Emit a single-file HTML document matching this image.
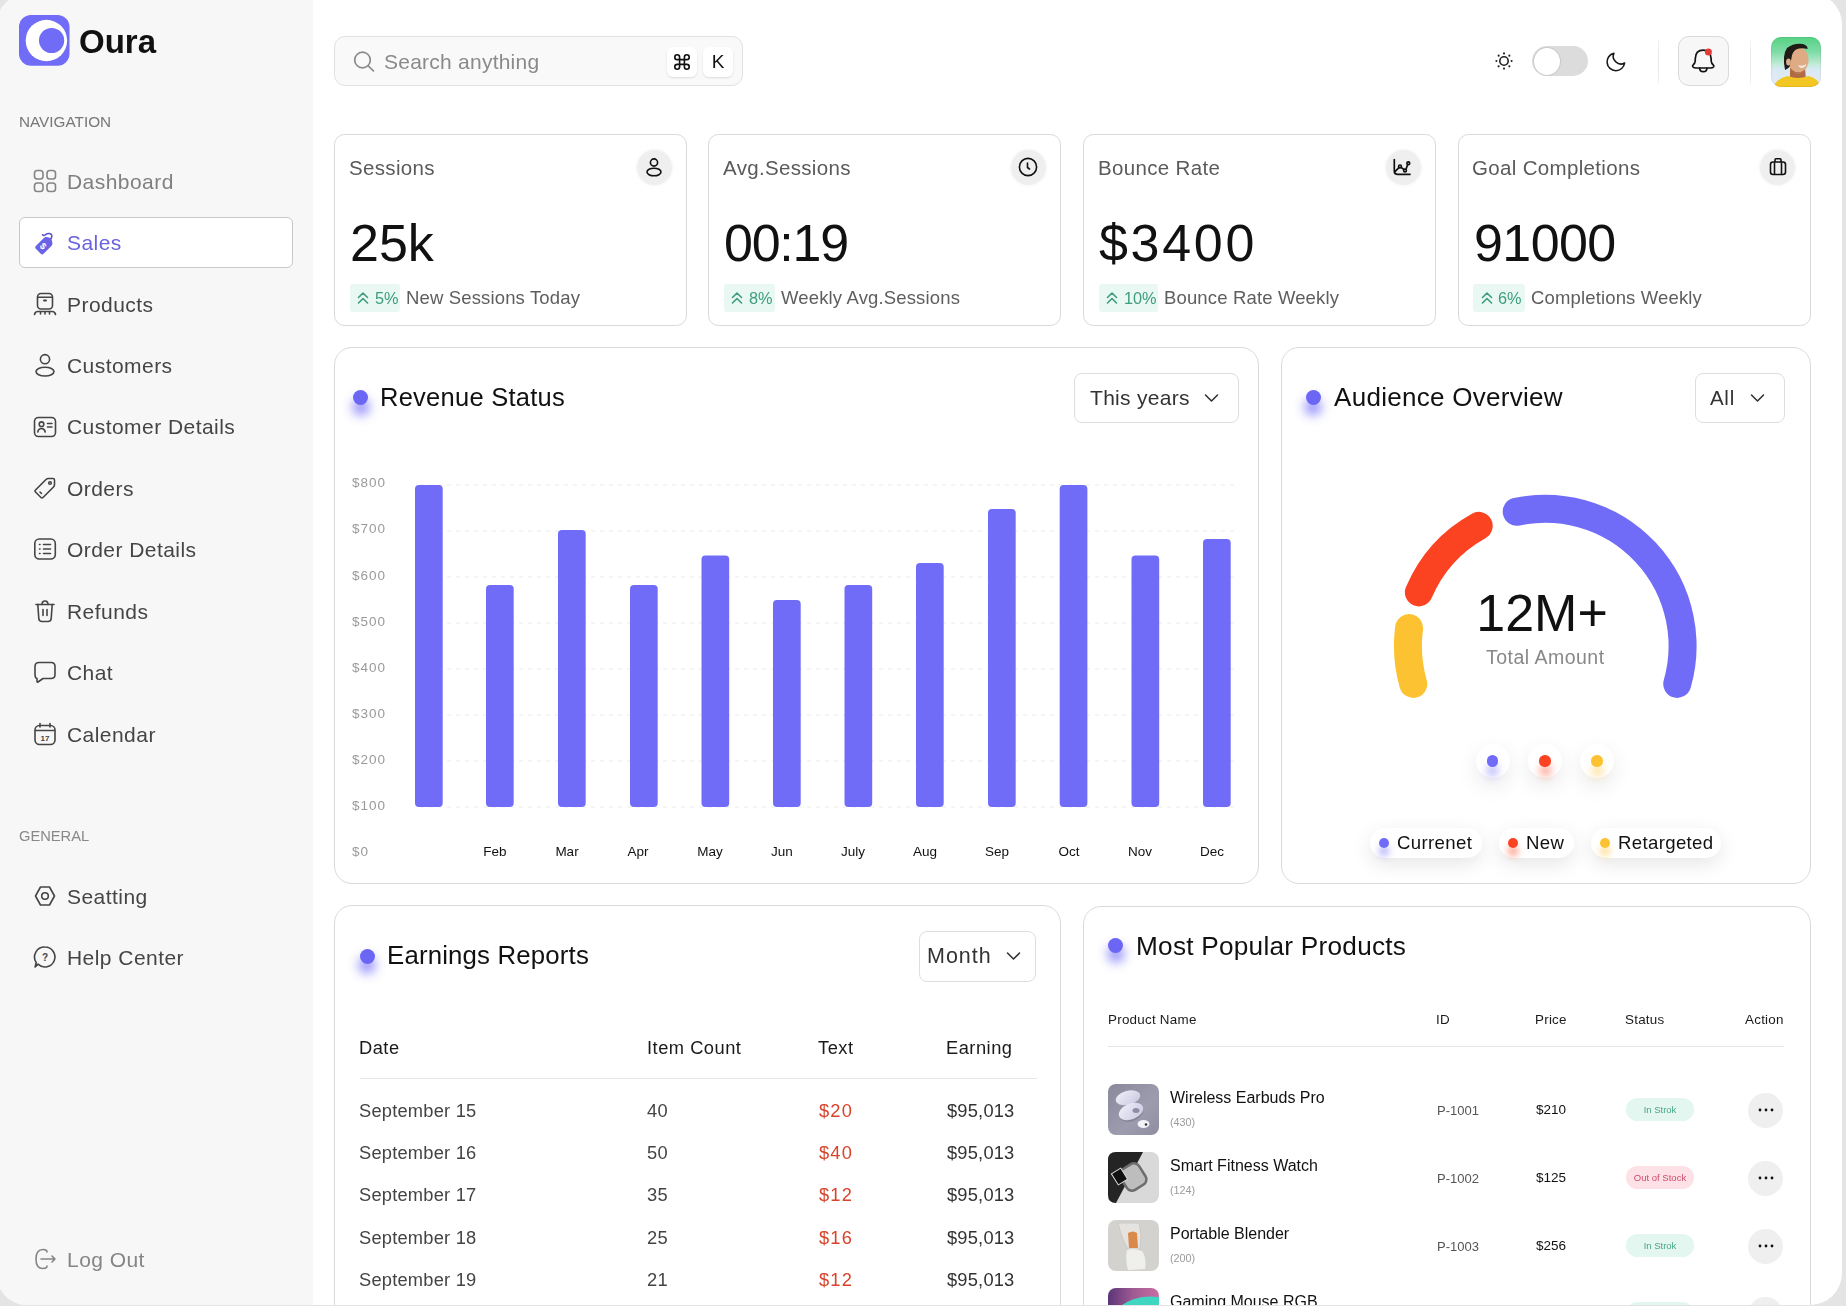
<!DOCTYPE html><html><head><meta charset="utf-8"><style>
*{box-sizing:border-box;margin:0;padding:0}
html,body{width:1846px;height:1306px;overflow:hidden;background:#e4e4e4}
body{font-family:"Liberation Sans",sans-serif;position:relative}
.win{position:absolute;left:-3px;top:-6px;width:1845px;height:1310.7px;border-radius:30px 30px 32px 30px;overflow:hidden;background:#fff}
.t{position:absolute;line-height:1;white-space:nowrap;will-change:transform}
.b{position:absolute}
svg.b{overflow:visible}
</style></head><body><div class="win"><div class="b" style="left:3px;top:6px;width:1842px;height:1306px">
<div class="b" style="left:0px;top:0px;width:313px;height:1305px;background:#f7f7f7"></div>
<svg class="b" style="left:19.4px;top:15px;" width="51" height="51" viewBox="0 0 51 51" fill="none"><rect x="0" y="0" width="50.5" height="50.8" rx="12" fill="#716cf8"/><circle cx="27.4" cy="25.5" r="20.7" fill="#fff"/><circle cx="32.6" cy="25.5" r="12.6" fill="#716cf8"/></svg>
<div class="t" style="left:79.30px;top:24.76px;font-size:33px;color:#111;font-weight:700;">Oura</div>
<div class="t" style="left:19.10px;top:114.05px;font-size:15.3px;color:#777;font-weight:400;">NAVIGATION</div>
<svg class="b" style="left:32.5px;top:168.9px;" width="24" height="24" viewBox="0 0 24 24" fill="none"><g stroke="#858585" stroke-width="1.6" stroke-linecap="round" stroke-linejoin="round"><rect x="1.5" y="1.5" width="8.5" height="8.5" rx="2.8"/><rect x="14" y="1.5" width="8.5" height="8.5" rx="2.8"/><rect x="1.5" y="14" width="8.5" height="8.5" rx="2.8"/><rect x="14" y="14" width="8.5" height="8.5" rx="2.8"/></g></svg>
<div class="t" style="left:67.20px;top:170.72px;font-size:21px;color:#808080;font-weight:400;;letter-spacing:0.45px">Dashboard</div>
<div class="b" style="left:19px;top:217px;width:274px;height:51px;background:#fff;border:1px solid #c9c9c9;border-radius:6px"></div>
<svg class="b" style="left:32.5px;top:230.32000000000002px;" width="24" height="24" viewBox="0 0 24 24" fill="none"><g transform="rotate(45 12 14.5)"><path d="M6.5 11 Q6.5 9 8 8 L12 5.5 L16 8 Q17.5 9 17.5 11 L17.5 22 Q17.5 24 15.5 24 L8.5 24 Q6.5 24 6.5 22 Z" fill="#6a63e6"/><text x="12" y="20" font-size="9" font-weight="700" fill="#fff" text-anchor="middle" font-family="Liberation Sans">$</text></g><path d="M18.3 8.3 Q19.8 4.2 16.8 3.6 Q14.3 3.3 12.3 4.8 Q10.5 6 9.6 4.8" stroke="#5a54d0" stroke-width="1.6" fill="none" stroke-linecap="round"/></svg>
<div class="t" style="left:67.20px;top:232.14px;font-size:21px;color:#6a63e0;font-weight:400;;letter-spacing:0.45px">Sales</div>
<svg class="b" style="left:32.5px;top:291.74px;" width="24" height="24" viewBox="0 0 24 24" fill="none"><g stroke="#454545" stroke-width="1.6" stroke-linecap="round" stroke-linejoin="round"><rect x="4.5" y="1.5" width="15" height="15.5" rx="3.5"/><path d="M4.8 5.2 H19.2"/><path d="M11 8.6 H13" stroke-width="2"/><path d="M1.5 22.5 Q2 19.5 5 19.5 H19 Q22 19.5 22.5 22.5"/><path d="M7.5 20 V22 M12 20 V22 M16.5 20 V22"/></g></svg>
<div class="t" style="left:67.20px;top:293.56px;font-size:21px;color:#454545;font-weight:400;;letter-spacing:0.45px">Products</div>
<svg class="b" style="left:32.5px;top:353.15999999999997px;" width="24" height="24" viewBox="0 0 24 24" fill="none"><g stroke="#454545" stroke-width="1.6" stroke-linecap="round" stroke-linejoin="round"><circle cx="12" cy="6.2" r="4.6"/><ellipse cx="12" cy="18.6" rx="9" ry="4.4"/></g></svg>
<div class="t" style="left:67.20px;top:354.98px;font-size:21px;color:#454545;font-weight:400;;letter-spacing:0.45px">Customers</div>
<svg class="b" style="left:32.5px;top:414.58px;" width="24" height="24" viewBox="0 0 24 24" fill="none"><g stroke="#454545" stroke-width="1.6" stroke-linecap="round" stroke-linejoin="round"><rect x="1.5" y="2.5" width="21" height="19" rx="4"/><circle cx="8.5" cy="9.2" r="2.3"/><path d="M4.8 17 Q5.5 13.5 8.5 13.5 Q11.5 13.5 12.2 17"/><path d="M14.5 8.5 H19 M14.5 12 H19"/></g></svg>
<div class="t" style="left:67.20px;top:416.40px;font-size:21px;color:#454545;font-weight:400;;letter-spacing:0.45px">Customer Details</div>
<svg class="b" style="left:32.5px;top:476.0px;" width="24" height="24" viewBox="0 0 24 24" fill="none"><g stroke="#454545" stroke-width="1.6" stroke-linecap="round" stroke-linejoin="round"><path d="M2.5 14 L13 3.5 Q14 2.5 15.5 2.5 L20 2.5 Q21.5 2.5 21.5 4 L21.5 8.5 Q21.5 10 20.5 11 L10 21.5 Q9 22.5 8 21.5 L2.5 16 Q1.5 15 2.5 14 Z"/><circle cx="17" cy="7" r="1.3"/><path d="M7 16 L8.5 17.5"/></g></svg>
<div class="t" style="left:67.20px;top:477.82px;font-size:21px;color:#454545;font-weight:400;;letter-spacing:0.45px">Orders</div>
<svg class="b" style="left:32.5px;top:537.42px;" width="24" height="24" viewBox="0 0 24 24" fill="none"><g stroke="#454545" stroke-width="1.6" stroke-linecap="round" stroke-linejoin="round"><rect x="1.8" y="2" width="20.5" height="20" rx="4.5"/><path d="M6.5 7.5 H7 M6.5 12 H7 M6.5 16.5 H7 M10.5 7.5 H17.5 M10.5 12 H17.5 M10.5 16.5 H17.5"/></g></svg>
<div class="t" style="left:67.20px;top:539.24px;font-size:21px;color:#454545;font-weight:400;;letter-spacing:0.45px">Order Details</div>
<svg class="b" style="left:32.5px;top:598.84px;" width="24" height="24" viewBox="0 0 24 24" fill="none"><g stroke="#454545" stroke-width="1.6" stroke-linecap="round" stroke-linejoin="round"><path d="M3 5.5 H21"/><path d="M9 5.5 Q9 2 12 2 Q15 2 15 5.5"/><path d="M4.8 5.5 L5.8 19.5 Q6 22.5 9 22.5 H15 Q18 22.5 18.2 19.5 L19.2 5.5"/><path d="M10 10.5 V16.5 M14 10.5 V16.5"/></g></svg>
<div class="t" style="left:67.20px;top:600.66px;font-size:21px;color:#454545;font-weight:400;;letter-spacing:0.45px">Refunds</div>
<svg class="b" style="left:32.5px;top:660.26px;" width="24" height="24" viewBox="0 0 24 24" fill="none"><g stroke="#454545" stroke-width="1.6" stroke-linecap="round" stroke-linejoin="round"><path d="M6 2.5 H18 Q22 2.5 22 6.5 V14.5 Q22 18.5 18 18.5 H10 L5 22 Q4 22.5 4 21.5 V18.5 Q2 18 2 14.5 V6.5 Q2 2.5 6 2.5 Z"/></g></svg>
<div class="t" style="left:67.20px;top:662.08px;font-size:21px;color:#454545;font-weight:400;;letter-spacing:0.45px">Chat</div>
<svg class="b" style="left:32.5px;top:721.68px;" width="24" height="24" viewBox="0 0 24 24" fill="none"><g stroke="#454545" stroke-width="1.6" stroke-linecap="round" stroke-linejoin="round"><rect x="2" y="3.5" width="20" height="19" rx="4.5"/><path d="M7 1.5 V5 M17 1.5 V5 M2.5 8.5 H21.5"/></g><text x="12" y="19" font-size="8" font-weight="700" fill="#454545" text-anchor="middle" font-family="Liberation Sans">17</text></svg>
<div class="t" style="left:67.20px;top:723.50px;font-size:21px;color:#454545;font-weight:400;;letter-spacing:0.45px">Calendar</div>
<div class="t" style="left:19.10px;top:828.95px;font-size:14.7px;color:#888;font-weight:400;">GENERAL</div>
<svg class="b" style="left:32.5px;top:883.6999999999999px;" width="24" height="24" viewBox="0 0 24 24" fill="none"><g stroke="#454545" stroke-width="1.6" stroke-linecap="round" stroke-linejoin="round"><path d="M7.5 3 H16.5 L21.5 12 L16.5 21 H7.5 L2.5 12 Z" stroke-linejoin="round"/><circle cx="12" cy="12" r="3.3"/></g></svg>
<div class="t" style="left:67.20px;top:885.52px;font-size:21px;color:#454545;font-weight:400;;letter-spacing:0.45px">Seatting</div>
<svg class="b" style="left:32.5px;top:944.9999999999999px;" width="24" height="24" viewBox="0 0 24 24" fill="none"><g stroke="#454545" stroke-width="1.6" stroke-linecap="round" stroke-linejoin="round"><path d="M12 2 A10 10 0 1 1 5 19.2 L2.3 21.8 Q2 22.2 2.2 21.5 L3.2 17.5 A10 10 0 0 1 12 2 Z"/></g><text x="12" y="16" font-size="10" font-weight="700" fill="#454545" text-anchor="middle" font-family="Liberation Sans">?</text></svg>
<div class="t" style="left:67.20px;top:946.82px;font-size:21px;color:#454545;font-weight:400;;letter-spacing:0.45px">Help Center</div>
<svg class="b" style="left:32.5px;top:1247.0px;" width="24" height="24" viewBox="0 0 24 24" fill="none"><g stroke="#858585" stroke-width="1.6" stroke-linecap="round" stroke-linejoin="round"><path d="M14 5 Q14 2.5 10 2.5 Q3 2.5 3 12 Q3 21.5 10 21.5 Q14 21.5 14 19"/><path d="M8 12 H22 M19 9 L22 12 L19 15"/></g></svg>
<div class="t" style="left:67.20px;top:1248.82px;font-size:21px;color:#858585;font-weight:400;;letter-spacing:0.45px">Log Out</div>
<div class="b" style="left:334px;top:36px;width:409px;height:50px;background:#f9f9f9;border:1px solid #e2e2e2;border-radius:11px"></div>
<svg class="b" style="left:352px;top:50px;" width="24" height="24" viewBox="0 0 24 24" fill="none"><g stroke="#8a8a8a" stroke-width="1.7" stroke-linecap="round"><circle cx="10.5" cy="10" r="7.8"/><path d="M16.2 15.8 L21.5 21"/></g></svg>
<div class="t" style="left:384.20px;top:51.22px;font-size:21px;color:#8a8a8a;font-weight:400;;letter-spacing:0.24px">Search anything</div>
<div class="b" style="left:667px;top:47px;width:30px;height:30px;background:#fff;border-radius:6px;box-shadow:0 1px 2px rgba(0,0,0,.12)"></div>
<div class="b" style="left:703px;top:47px;width:30px;height:30px;background:#fff;border-radius:6px;box-shadow:0 1px 2px rgba(0,0,0,.12)"></div>
<svg class="b" style="left:673.5px;top:53.5px;" width="16" height="16" viewBox="0 0 16 16" fill="none"><path d="M6 6 V4 A2 2 0 1 0 4 6 H12 A2 2 0 1 0 10 4 V12 A2 2 0 1 0 12 10 H4 A2 2 0 1 0 6 12 Z" stroke="#111" stroke-width="1.35" stroke-linejoin="round" transform="translate(-1.6 -1.6) scale(1.2)"/></svg>
<div class="t" style="left:518.00px;width:400px;text-align:center;top:52.41px;font-size:19px;color:#111;font-weight:400;">K</div>
<svg class="b" style="left:1494.5px;top:52px;" width="18" height="18" viewBox="0 0 18 18" fill="none"><circle cx="9" cy="9" r="4.2" stroke="#222" stroke-width="1.6"/><circle cx="16.60" cy="9.00" r="1.05" fill="#222"/><circle cx="14.37" cy="14.37" r="1.05" fill="#222"/><circle cx="9.00" cy="16.60" r="1.05" fill="#222"/><circle cx="3.63" cy="14.37" r="1.05" fill="#222"/><circle cx="1.40" cy="9.00" r="1.05" fill="#222"/><circle cx="3.63" cy="3.63" r="1.05" fill="#222"/><circle cx="9.00" cy="1.40" r="1.05" fill="#222"/><circle cx="14.37" cy="3.63" r="1.05" fill="#222"/></svg>
<div class="b" style="left:1532px;top:46px;width:56px;height:30px;background:#dcdcdc;border-radius:15px"></div>
<div class="b" style="left:1533px;top:46.5px;width:28px;height:29.0px;background:#fff;border-radius:50%;border:1.5px solid #c9c9c9"></div>
<svg class="b" style="left:1606px;top:51px;" width="20" height="20" viewBox="0 0 20 20" fill="none"><path d="M7.9 2.3 A8.8 8.8 0 1 0 18.6 12 A7.66 7.66 0 0 1 7.9 2.3 Z" stroke="#1a1a1a" stroke-width="1.6" stroke-linejoin="round"/></svg>
<div class="b" style="left:1657.8px;top:40px;width:1.2000000000000455px;height:44px;background:linear-gradient(#f4f4f4,#e8e8e8 30%,#e8e8e8 70%,#f4f4f4)"></div>
<div class="b" style="left:1678px;top:36px;width:50.5px;height:50px;background:#f7f7f7;border:1px solid #dadada;border-radius:11px"></div>
<svg class="b" style="left:1691px;top:48px;" width="26" height="26" viewBox="0 0 26 26" fill="none"><g stroke="#111" stroke-width="1.7" stroke-linejoin="round" stroke-linecap="round"><path d="M12.2 2.2 C7 2.2 4.5 5.5 4.3 10.5 L4.2 13 Q4 15.5 2.2 16.8 Q1 18 2 19 Q3 20 5 20 H19.5 Q21.5 20 22.5 19 Q23.4 18 22.2 16.8 Q20.4 15.5 20.2 13 L20.1 10.5 C19.9 5.5 17.4 2.2 12.2 2.2 Z"/><path d="M8.7 20.2 Q8.7 23.6 12.3 23.6 Q15.9 23.6 15.9 20.2"/></g><circle cx="17.4" cy="4" r="3.5" fill="#e43a35"/></svg>
<div class="b" style="left:1749.8px;top:40px;width:1.2000000000000455px;height:44px;background:linear-gradient(#f4f4f4,#e8e8e8 30%,#e8e8e8 70%,#f4f4f4)"></div>
<svg class="b" style="left:1770.5px;top:36.5px;" width="50" height="50" viewBox="0 0 50 50" fill="none"><defs><linearGradient id="ag" x1="0" y1="0" x2="0" y2="1"><stop offset="0" stop-color="#55d283"/><stop offset=".3" stop-color="#7fdca6"/><stop offset=".55" stop-color="#c2ebd9"/><stop offset=".65" stop-color="#d9e9f4"/><stop offset="1" stop-color="#e4ecf7"/></linearGradient><clipPath id="ac"><rect width="50" height="50" rx="10"/></clipPath></defs>
<g clip-path="url(#ac)"><rect width="50" height="50" fill="url(#ag)"/>
<path d="M19 31 L34 31 L35 43 L19 43 Z" fill="#b06a44"/>
<path d="M2 52 Q4 42 17 39 Q27 43 37 39 Q48 41 50 52 Z" fill="#f2c623"/>
<ellipse cx="27" cy="22.5" rx="10.5" ry="13" fill="#dfab85" transform="rotate(-8 27 22.5)"/>
<path d="M19.5 32 Q27 38.5 34 32.5 Q31 37.5 26 37.5 Z" fill="#b97852"/>
<path d="M14 33 Q11 18 16 11 Q23 5.5 32 7 Q37 8.5 36.5 12 Q30 10.5 25 12.5 Q21 15 20.5 21 Q19.5 27 18.5 30 Q16.5 32 14 33 Z" fill="#1f1c18"/>
<ellipse cx="17.5" cy="25" rx="2.4" ry="3.6" fill="#e0ab88"/>
<path d="M27 28 Q31.5 30 35.5 27 Q34 31 30 31 Q28 30.5 27 28 Z" fill="#f4ece6"/>
</g><rect x=".5" y=".5" width="49" height="49" rx="10" stroke="rgba(0,0,0,.06)"/></svg>
<div class="b" style="left:334px;top:134px;width:353px;height:191.5px;background:#fff;border:1.2px solid #d9d9d9;border-radius:10.5px"></div>
<div class="t" style="left:348.50px;top:157.84px;font-size:20.5px;color:#5a5a5a;font-weight:400;;letter-spacing:0.33px">Sessions</div>
<div class="b" style="left:636.5px;top:150px;width:35.0px;height:35px;background:#efefef;border-radius:50%;box-shadow:0 0 3px 1px rgba(0,0,0,.04)"></div>
<svg class="b" style="left:644px;top:157px;" width="20" height="20" viewBox="0 0 20 20" fill="none"><g stroke="#111" stroke-width="1.6"><circle cx="10" cy="5.5" r="3.6"/><ellipse cx="10" cy="15" rx="7" ry="3.8"/></g></svg>
<div class="t" style="left:350.00px;top:216.97px;font-size:52px;color:#111;font-weight:400;letter-spacing:0px">25k</div>
<div class="b" style="left:349.7px;top:284.4px;width:50.5px;height:27.30000000000001px;background:#e9f8f3;border-radius:3px"></div>
<svg class="b" style="left:356px;top:290px;" width="14" height="16" viewBox="0 0 14 16" fill="none"><path d="M2.5 7.5 L7 3 L11.5 7.5 M2.5 13 L7 8.5 L11.5 13" stroke="#3d9d7c" stroke-width="1.6" stroke-linecap="round" stroke-linejoin="round"/></svg>
<div class="t" style="left:374.50px;top:290.40px;font-size:16.3px;color:#3d9d7c;font-weight:400;">5%</div>
<div class="t" style="left:406.00px;top:289.34px;font-size:18.5px;color:#5e5e5e;font-weight:400;;letter-spacing:0.15px">New Sessions Today</div>
<div class="b" style="left:708.3px;top:134px;width:353.0px;height:191.5px;background:#fff;border:1.2px solid #d9d9d9;border-radius:10.5px"></div>
<div class="t" style="left:722.80px;top:157.84px;font-size:20.5px;color:#5a5a5a;font-weight:400;;letter-spacing:0.33px">Avg.Sessions</div>
<div class="b" style="left:1010.8px;top:150px;width:35.0px;height:35px;background:#efefef;border-radius:50%;box-shadow:0 0 3px 1px rgba(0,0,0,.04)"></div>
<svg class="b" style="left:1018.3px;top:157px;" width="20" height="20" viewBox="0 0 20 20" fill="none"><g stroke="#111" stroke-width="1.6" stroke-linecap="round"><circle cx="10" cy="10" r="8.6"/><path d="M9.5 6 V10.5 L11.5 12"/></g></svg>
<div class="t" style="left:724.30px;top:216.97px;font-size:52px;color:#111;font-weight:400;letter-spacing:-1.25px">00:19</div>
<div class="b" style="left:724.0px;top:284.4px;width:51.0px;height:27.30000000000001px;background:#e9f8f3;border-radius:3px"></div>
<svg class="b" style="left:730.3px;top:290px;" width="14" height="16" viewBox="0 0 14 16" fill="none"><path d="M2.5 7.5 L7 3 L11.5 7.5 M2.5 13 L7 8.5 L11.5 13" stroke="#3d9d7c" stroke-width="1.6" stroke-linecap="round" stroke-linejoin="round"/></svg>
<div class="t" style="left:748.80px;top:290.40px;font-size:16.3px;color:#3d9d7c;font-weight:400;">8%</div>
<div class="t" style="left:780.80px;top:289.34px;font-size:18.5px;color:#5e5e5e;font-weight:400;;letter-spacing:0.15px">Weekly Avg.Sessions</div>
<div class="b" style="left:1083.3px;top:134px;width:353.0px;height:191.5px;background:#fff;border:1.2px solid #d9d9d9;border-radius:10.5px"></div>
<div class="t" style="left:1097.80px;top:157.84px;font-size:20.5px;color:#5a5a5a;font-weight:400;;letter-spacing:0.33px">Bounce Rate</div>
<div class="b" style="left:1385.8px;top:150px;width:35.0px;height:35px;background:#efefef;border-radius:50%;box-shadow:0 0 3px 1px rgba(0,0,0,.04)"></div>
<svg class="b" style="left:1393.3px;top:157px;" width="20" height="20" viewBox="0 0 20 20" fill="none"><g stroke="#111" stroke-width="1.7" stroke-linecap="round" stroke-linejoin="round"><path d="M1.3 2.5 V14.3 Q1.3 17.3 4.3 17.3 H17"/><path d="M2 14.6 L5.9 10.6 M8.1 10.4 L10.9 12.5 M13 12.3 L14.6 7.7"/><circle cx="7" cy="9.4" r="1.4"/><circle cx="12" cy="13.4" r="1.4"/><circle cx="15.3" cy="6.2" r="1.4"/></g></svg>
<div class="t" style="left:1099.30px;top:216.97px;font-size:52px;color:#111;font-weight:400;letter-spacing:2.7px">$3400</div>
<div class="b" style="left:1099.0px;top:284.4px;width:59.0px;height:27.30000000000001px;background:#e9f8f3;border-radius:3px"></div>
<svg class="b" style="left:1105.3px;top:290px;" width="14" height="16" viewBox="0 0 14 16" fill="none"><path d="M2.5 7.5 L7 3 L11.5 7.5 M2.5 13 L7 8.5 L11.5 13" stroke="#3d9d7c" stroke-width="1.6" stroke-linecap="round" stroke-linejoin="round"/></svg>
<div class="t" style="left:1123.80px;top:290.40px;font-size:16.3px;color:#3d9d7c;font-weight:400;">10%</div>
<div class="t" style="left:1163.80px;top:289.34px;font-size:18.5px;color:#5e5e5e;font-weight:400;;letter-spacing:0.15px">Bounce Rate Weekly</div>
<div class="b" style="left:1457.5px;top:134px;width:353.0px;height:191.5px;background:#fff;border:1.2px solid #d9d9d9;border-radius:10.5px"></div>
<div class="t" style="left:1472.00px;top:157.84px;font-size:20.5px;color:#5a5a5a;font-weight:400;;letter-spacing:0.33px">Goal Completions</div>
<div class="b" style="left:1760.0px;top:150px;width:35.0px;height:35px;background:#efefef;border-radius:50%;box-shadow:0 0 3px 1px rgba(0,0,0,.04)"></div>
<svg class="b" style="left:1767.5px;top:157px;" width="20" height="20" viewBox="0 0 20 20" fill="none"><g stroke="#111" stroke-width="1.6" stroke-linejoin="round"><rect x="2.5" y="5" width="15" height="12.5" rx="2.5"/><path d="M7 5 V2.8 Q7 1.8 8 1.8 H12 Q13 1.8 13 2.8 V5"/><path d="M6.5 5.3 V17.3 M13.5 5.3 V17.3"/></g></svg>
<div class="t" style="left:1473.50px;top:216.97px;font-size:52px;color:#111;font-weight:400;letter-spacing:-0.6px">91000</div>
<div class="b" style="left:1473.2px;top:284.4px;width:52.0px;height:27.30000000000001px;background:#e9f8f3;border-radius:3px"></div>
<svg class="b" style="left:1479.5px;top:290px;" width="14" height="16" viewBox="0 0 14 16" fill="none"><path d="M2.5 7.5 L7 3 L11.5 7.5 M2.5 13 L7 8.5 L11.5 13" stroke="#3d9d7c" stroke-width="1.6" stroke-linecap="round" stroke-linejoin="round"/></svg>
<div class="t" style="left:1498.00px;top:290.40px;font-size:16.3px;color:#3d9d7c;font-weight:400;">6%</div>
<div class="t" style="left:1531.00px;top:289.34px;font-size:18.5px;color:#5e5e5e;font-weight:400;;letter-spacing:0.15px">Completions Weekly</div>
<div class="b" style="left:334px;top:347px;width:924.5px;height:536.5px;background:#fff;border:1.2px solid #d9d9d9;border-radius:18px"></div>
<div class="b" style="left:352.7px;top:398.5px;width:16.0px;height:16.0px;background:#716cf8;border-radius:50%;filter:blur(6px);opacity:.85"></div>
<div class="b" style="left:353.2px;top:390.0px;width:15.0px;height:15.0px;background:#6c66f5;border-radius:50%"></div>
<div class="t" style="left:380.20px;top:385.01px;font-size:25.5px;color:#111;font-weight:400;;letter-spacing:0.25px">Revenue Status</div>
<div class="b" style="left:1074px;top:372.6px;width:165.4000000000001px;height:50.099999999999966px;background:#fff;border:1.2px solid #dedede;border-radius:8px"></div>
<div class="t" style="left:1089.70px;top:387.12px;font-size:21px;color:#333;font-weight:400;;letter-spacing:0.3px">This years</div>
<svg class="b" style="left:1204px;top:393px;" width="15" height="10" viewBox="0 0 15 10" fill="none"><path d="M1.5 2 L7.5 8 L13.5 2" stroke="#333" stroke-width="1.6" stroke-linecap="round" stroke-linejoin="round"/></svg>
<svg class="b" style="left:0px;top:0px;" width="1846" height="1306" viewBox="0 0 1846 1306" fill="none"><line x1="420" y1="485" x2="1236" y2="485" stroke="#ececec" stroke-width="1.2" stroke-dasharray="4 5"/><line x1="420" y1="531" x2="1236" y2="531" stroke="#ececec" stroke-width="1.2" stroke-dasharray="4 5"/><line x1="420" y1="577" x2="1236" y2="577" stroke="#ececec" stroke-width="1.2" stroke-dasharray="4 5"/><line x1="420" y1="623" x2="1236" y2="623" stroke="#ececec" stroke-width="1.2" stroke-dasharray="4 5"/><line x1="420" y1="669" x2="1236" y2="669" stroke="#ececec" stroke-width="1.2" stroke-dasharray="4 5"/><line x1="420" y1="715" x2="1236" y2="715" stroke="#ececec" stroke-width="1.2" stroke-dasharray="4 5"/><line x1="420" y1="761" x2="1236" y2="761" stroke="#ececec" stroke-width="1.2" stroke-dasharray="4 5"/><line x1="420" y1="807" x2="1236" y2="807" stroke="#ececec" stroke-width="1.2" stroke-dasharray="4 5"/></svg>
<div class="t" style="left:352.20px;top:476.37px;font-size:13.5px;color:#9a9a9a;font-weight:400;;letter-spacing:1.0px">$800</div>
<div class="t" style="left:352.20px;top:522.44px;font-size:13.5px;color:#9a9a9a;font-weight:400;;letter-spacing:1.0px">$700</div>
<div class="t" style="left:352.20px;top:568.51px;font-size:13.5px;color:#9a9a9a;font-weight:400;;letter-spacing:1.0px">$600</div>
<div class="t" style="left:352.20px;top:614.58px;font-size:13.5px;color:#9a9a9a;font-weight:400;;letter-spacing:1.0px">$500</div>
<div class="t" style="left:352.20px;top:660.65px;font-size:13.5px;color:#9a9a9a;font-weight:400;;letter-spacing:1.0px">$400</div>
<div class="t" style="left:352.20px;top:706.72px;font-size:13.5px;color:#9a9a9a;font-weight:400;;letter-spacing:1.0px">$300</div>
<div class="t" style="left:352.20px;top:752.79px;font-size:13.5px;color:#9a9a9a;font-weight:400;;letter-spacing:1.0px">$200</div>
<div class="t" style="left:352.20px;top:798.86px;font-size:13.5px;color:#9a9a9a;font-weight:400;;letter-spacing:1.0px">$100</div>
<div class="t" style="left:352.20px;top:844.93px;font-size:13.5px;color:#9a9a9a;font-weight:400;;letter-spacing:1.0px">$0</div>
<svg class="b" style="left:0px;top:0px;" width="1846" height="1306" viewBox="0 0 1846 1306" fill="none"><rect x="415" y="485" width="27.7" height="322" rx="4" fill="#716cf8"/><rect x="486" y="585" width="27.7" height="222" rx="4" fill="#716cf8"/><rect x="558" y="530" width="27.7" height="277" rx="4" fill="#716cf8"/><rect x="630" y="585" width="27.7" height="222" rx="4" fill="#716cf8"/><rect x="701.5" y="555.5" width="27.7" height="251.5" rx="4" fill="#716cf8"/><rect x="773" y="600" width="27.7" height="207" rx="4" fill="#716cf8"/><rect x="844.5" y="585" width="27.7" height="222" rx="4" fill="#716cf8"/><rect x="916" y="563" width="27.7" height="244" rx="4" fill="#716cf8"/><rect x="988" y="509" width="27.7" height="298" rx="4" fill="#716cf8"/><rect x="1059.7" y="485" width="27.7" height="322" rx="4" fill="#716cf8"/><rect x="1131.5" y="555.5" width="27.7" height="251.5" rx="4" fill="#716cf8"/><rect x="1203" y="539" width="27.7" height="268" rx="4" fill="#716cf8"/></svg>
<div class="t" style="left:295.00px;width:400px;text-align:center;top:844.77px;font-size:13.5px;color:#111;font-weight:400;">Feb</div>
<div class="t" style="left:366.50px;width:400px;text-align:center;top:844.77px;font-size:13.5px;color:#111;font-weight:400;">Mar</div>
<div class="t" style="left:438.40px;width:400px;text-align:center;top:844.77px;font-size:13.5px;color:#111;font-weight:400;">Apr</div>
<div class="t" style="left:509.80px;width:400px;text-align:center;top:844.77px;font-size:13.5px;color:#111;font-weight:400;">May</div>
<div class="t" style="left:581.60px;width:400px;text-align:center;top:844.77px;font-size:13.5px;color:#111;font-weight:400;">Jun</div>
<div class="t" style="left:653.20px;width:400px;text-align:center;top:844.77px;font-size:13.5px;color:#111;font-weight:400;">July</div>
<div class="t" style="left:725.00px;width:400px;text-align:center;top:844.77px;font-size:13.5px;color:#111;font-weight:400;">Aug</div>
<div class="t" style="left:796.70px;width:400px;text-align:center;top:844.77px;font-size:13.5px;color:#111;font-weight:400;">Sep</div>
<div class="t" style="left:868.50px;width:400px;text-align:center;top:844.77px;font-size:13.5px;color:#111;font-weight:400;">Oct</div>
<div class="t" style="left:940.00px;width:400px;text-align:center;top:844.77px;font-size:13.5px;color:#111;font-weight:400;">Nov</div>
<div class="t" style="left:1011.60px;width:400px;text-align:center;top:844.77px;font-size:13.5px;color:#111;font-weight:400;">Dec</div>
<div class="b" style="left:1280.5px;top:347px;width:530.0px;height:536.5px;background:#fff;border:1.2px solid #d9d9d9;border-radius:18px"></div>
<div class="b" style="left:1305px;top:398.7px;width:16px;height:16.0px;background:#716cf8;border-radius:50%;filter:blur(6px);opacity:.85"></div>
<div class="b" style="left:1305.5px;top:390.2px;width:15.0px;height:15.0px;background:#6c66f5;border-radius:50%"></div>
<div class="t" style="left:1334.00px;top:384.49px;font-size:26px;color:#111;font-weight:400;;letter-spacing:0.29px">Audience Overview</div>
<div class="b" style="left:1695px;top:372.8px;width:89.79999999999995px;height:49.89999999999998px;background:#fff;border:1.2px solid #dedede;border-radius:8px"></div>
<div class="t" style="left:1710.00px;top:387.64px;font-size:20.5px;color:#333;font-weight:400;;letter-spacing:0.7px">All</div>
<svg class="b" style="left:1749.5px;top:393px;" width="15" height="10" viewBox="0 0 15 10" fill="none"><path d="M1.5 2 L7.5 8 L13.5 2" stroke="#333" stroke-width="1.6" stroke-linecap="round" stroke-linejoin="round"/></svg>
<svg class="b" style="left:0px;top:0px;" width="1846" height="1306" viewBox="0 0 1846 1306" fill="none"><path d="M1516.70 511.70 A137.3 137.3 0 0 1 1677.23 683.85" stroke="#716cf8" stroke-width="28" stroke-linecap="round" fill="none"/><path d="M1418.86 592.35 A137.3 137.3 0 0 1 1478.69 525.91" stroke="#fb4322" stroke-width="28" stroke-linecap="round" fill="none"/><path d="M1413.27 683.85 A137.3 137.3 0 0 1 1409.12 628.08" stroke="#fcc232" stroke-width="28" stroke-linecap="round" fill="none"/></svg>
<div class="t" style="left:1341.50px;width:400px;text-align:center;top:586.97px;font-size:52px;color:#111;font-weight:400;">12M+</div>
<div class="t" style="left:1345.30px;width:400px;text-align:center;top:647.99px;font-size:19.5px;color:#888;font-weight:400;;letter-spacing:0.5px;text-indent:0.5px">Total Amount</div>
<div class="b" style="left:1475.5px;top:744px;width:34.0px;height:34px;background:#fff;border-radius:50%;box-shadow:0 8px 22px rgba(0,0,0,.09)"></div>
<div class="b" style="left:1487.0px;top:764.5px;width:11.0px;height:11.0px;background:#716cf8;border-radius:50%;filter:blur(4px);opacity:.55"></div>
<div class="b" style="left:1486.9px;top:755.4px;width:11.199999999999818px;height:11.200000000000045px;background:#716cf8;border-radius:50%"></div>
<div class="b" style="left:1528px;top:744px;width:34px;height:34px;background:#fff;border-radius:50%;box-shadow:0 8px 22px rgba(0,0,0,.09)"></div>
<div class="b" style="left:1539.5px;top:764.5px;width:11.0px;height:11.0px;background:#fb4322;border-radius:50%;filter:blur(4px);opacity:.55"></div>
<div class="b" style="left:1539.4px;top:755.4px;width:11.199999999999818px;height:11.200000000000045px;background:#fb4322;border-radius:50%"></div>
<div class="b" style="left:1580px;top:744px;width:34px;height:34px;background:#fff;border-radius:50%;box-shadow:0 8px 22px rgba(0,0,0,.09)"></div>
<div class="b" style="left:1591.5px;top:764.5px;width:11.0px;height:11.0px;background:#fcc232;border-radius:50%;filter:blur(4px);opacity:.55"></div>
<div class="b" style="left:1591.4px;top:755.4px;width:11.199999999999818px;height:11.200000000000045px;background:#fcc232;border-radius:50%"></div>
<div class="b" style="left:1370px;top:828px;width:111.5px;height:30.299999999999955px;background:#fff;border-radius:16px;box-shadow:0 6px 20px rgba(0,0,0,.1)"></div>
<div class="b" style="left:1379px;top:846px;width:10px;height:10px;background:#716cf8;border-radius:50%;filter:blur(3.5px);opacity:.55"></div>
<div class="b" style="left:1379px;top:838px;width:10px;height:10px;background:#716cf8;border-radius:50%"></div>
<div class="t" style="left:1396.50px;top:833.95px;font-size:18.6px;color:#111;font-weight:400;;letter-spacing:0.35px">Currenet</div>
<div class="b" style="left:1499px;top:828px;width:75px;height:30.299999999999955px;background:#fff;border-radius:16px;box-shadow:0 6px 20px rgba(0,0,0,.1)"></div>
<div class="b" style="left:1508.4px;top:846px;width:10.0px;height:10px;background:#fb4322;border-radius:50%;filter:blur(3.5px);opacity:.55"></div>
<div class="b" style="left:1508.4px;top:838px;width:10.0px;height:10px;background:#fb4322;border-radius:50%"></div>
<div class="t" style="left:1525.70px;top:833.95px;font-size:18.6px;color:#111;font-weight:400;;letter-spacing:0.35px">New</div>
<div class="b" style="left:1590.7px;top:828px;width:130.29999999999995px;height:30.299999999999955px;background:#fff;border-radius:16px;box-shadow:0 6px 20px rgba(0,0,0,.1)"></div>
<div class="b" style="left:1600.4px;top:846px;width:10.0px;height:10px;background:#fcc232;border-radius:50%;filter:blur(3.5px);opacity:.55"></div>
<div class="b" style="left:1600.4px;top:838px;width:10.0px;height:10px;background:#fcc232;border-radius:50%"></div>
<div class="t" style="left:1618.20px;top:833.95px;font-size:18.6px;color:#111;font-weight:400;;letter-spacing:0.35px">Retargeted</div>
<div class="b" style="left:334.3px;top:905px;width:727.2px;height:435px;background:#fff;border:1.2px solid #d9d9d9;border-radius:18px"></div>
<div class="b" style="left:359px;top:957px;width:16px;height:16px;background:#716cf8;border-radius:50%;filter:blur(6px);opacity:.85"></div>
<div class="b" style="left:359.5px;top:948.5px;width:15.0px;height:15.0px;background:#6c66f5;border-radius:50%"></div>
<div class="t" style="left:386.90px;top:943.36px;font-size:25.8px;color:#111;font-weight:400;;letter-spacing:0.17px">Earnings Reports</div>
<div class="b" style="left:919px;top:930.5px;width:116.5px;height:51.0px;background:#fff;border:1.2px solid #dedede;border-radius:8px"></div>
<div class="t" style="left:927.30px;top:946.10px;font-size:21.5px;color:#333;font-weight:400;;letter-spacing:1.0px">Month</div>
<svg class="b" style="left:1005.8px;top:951px;" width="15" height="10" viewBox="0 0 15 10" fill="none"><path d="M1.5 2 L7.5 8 L13.5 2" stroke="#333" stroke-width="1.6" stroke-linecap="round" stroke-linejoin="round"/></svg>
<div class="t" style="left:359.20px;top:1039.11px;font-size:18.3px;color:#1a1a1a;font-weight:400;;letter-spacing:0.5px">Date</div>
<div class="t" style="left:646.60px;top:1039.11px;font-size:18.3px;color:#1a1a1a;font-weight:400;;letter-spacing:0.5px">Item Count</div>
<div class="t" style="left:818.00px;top:1039.11px;font-size:18.3px;color:#1a1a1a;font-weight:400;;letter-spacing:0.5px">Text</div>
<div class="t" style="left:946.20px;top:1039.11px;font-size:18.3px;color:#1a1a1a;font-weight:400;;letter-spacing:0.5px">Earning</div>
<div class="b" style="left:359.5px;top:1077.8px;width:677.5px;height:1.2000000000000455px;background:#e6e6e6"></div>
<div class="t" style="left:359.40px;top:1101.81px;font-size:18.3px;color:#444;font-weight:400;;letter-spacing:0.22px">September 15</div>
<div class="t" style="left:646.80px;top:1101.81px;font-size:18.3px;color:#444;font-weight:400;;letter-spacing:0.3px">40</div>
<div class="t" style="left:819.00px;top:1101.81px;font-size:18.3px;color:#d8432b;font-weight:400;;letter-spacing:1.2px">$20</div>
<div class="t" style="left:947.20px;top:1101.81px;font-size:18.3px;color:#333;font-weight:400;;letter-spacing:0.2px">$95,013</div>
<div class="t" style="left:359.40px;top:1144.11px;font-size:18.3px;color:#444;font-weight:400;;letter-spacing:0.22px">September 16</div>
<div class="t" style="left:646.80px;top:1144.11px;font-size:18.3px;color:#444;font-weight:400;;letter-spacing:0.3px">50</div>
<div class="t" style="left:819.00px;top:1144.11px;font-size:18.3px;color:#d8432b;font-weight:400;;letter-spacing:1.2px">$40</div>
<div class="t" style="left:947.20px;top:1144.11px;font-size:18.3px;color:#333;font-weight:400;;letter-spacing:0.2px">$95,013</div>
<div class="t" style="left:359.40px;top:1186.41px;font-size:18.3px;color:#444;font-weight:400;;letter-spacing:0.22px">September 17</div>
<div class="t" style="left:646.80px;top:1186.41px;font-size:18.3px;color:#444;font-weight:400;;letter-spacing:0.3px">35</div>
<div class="t" style="left:819.00px;top:1186.41px;font-size:18.3px;color:#d8432b;font-weight:400;;letter-spacing:1.2px">$12</div>
<div class="t" style="left:947.20px;top:1186.41px;font-size:18.3px;color:#333;font-weight:400;;letter-spacing:0.2px">$95,013</div>
<div class="t" style="left:359.40px;top:1228.71px;font-size:18.3px;color:#444;font-weight:400;;letter-spacing:0.22px">September 18</div>
<div class="t" style="left:646.80px;top:1228.71px;font-size:18.3px;color:#444;font-weight:400;;letter-spacing:0.3px">25</div>
<div class="t" style="left:819.00px;top:1228.71px;font-size:18.3px;color:#d8432b;font-weight:400;;letter-spacing:1.2px">$16</div>
<div class="t" style="left:947.20px;top:1228.71px;font-size:18.3px;color:#333;font-weight:400;;letter-spacing:0.2px">$95,013</div>
<div class="t" style="left:359.40px;top:1271.01px;font-size:18.3px;color:#444;font-weight:400;;letter-spacing:0.22px">September 19</div>
<div class="t" style="left:646.80px;top:1271.01px;font-size:18.3px;color:#444;font-weight:400;;letter-spacing:0.3px">21</div>
<div class="t" style="left:819.00px;top:1271.01px;font-size:18.3px;color:#d8432b;font-weight:400;;letter-spacing:1.2px">$12</div>
<div class="t" style="left:947.20px;top:1271.01px;font-size:18.3px;color:#333;font-weight:400;;letter-spacing:0.2px">$95,013</div>
<div class="b" style="left:1083px;top:905.5px;width:727.8px;height:434.5px;background:#fff;border:1.2px solid #d9d9d9;border-radius:18px"></div>
<div class="b" style="left:1107.8px;top:946.3px;width:16.0px;height:16.0px;background:#716cf8;border-radius:50%;filter:blur(6px);opacity:.85"></div>
<div class="b" style="left:1108.3px;top:937.8px;width:15.0px;height:15.0px;background:#6c66f5;border-radius:50%"></div>
<div class="t" style="left:1135.60px;top:933.02px;font-size:26.2px;color:#111;font-weight:400;;letter-spacing:0.25px">Most Popular Products</div>
<div class="t" style="left:1107.50px;top:1013.05px;font-size:13.4px;color:#1a1a1a;font-weight:400;;letter-spacing:0.25px">Product Name</div>
<div class="t" style="left:1435.50px;top:1013.05px;font-size:13.4px;color:#1a1a1a;font-weight:400;;letter-spacing:0.25px">ID</div>
<div class="t" style="left:1535.30px;top:1013.05px;font-size:13.4px;color:#1a1a1a;font-weight:400;;letter-spacing:0.25px">Price</div>
<div class="t" style="left:1624.80px;top:1013.05px;font-size:13.4px;color:#1a1a1a;font-weight:400;;letter-spacing:0.25px">Status</div>
<div class="t" style="left:1745.00px;top:1013.05px;font-size:13.4px;color:#1a1a1a;font-weight:400;;letter-spacing:0.25px">Action</div>
<div class="b" style="left:1108px;top:1046px;width:676px;height:1.2000000000000455px;background:#e6e6e6"></div>
<svg class="b" style="left:1108px;top:1084.2px;" width="51" height="51" viewBox="0 0 51 51" fill="none"><defs><linearGradient id="t1" x1="0" y1="0" x2="1" y2="1"><stop offset="0" stop-color="#8a899b"/><stop offset=".6" stop-color="#9d9cae"/><stop offset="1" stop-color="#8f8ea0"/></linearGradient><linearGradient id="t1b" x1="0" y1="0" x2="1" y2="1"><stop offset="0" stop-color="#f1f0fb"/><stop offset="1" stop-color="#c9c7de"/></linearGradient></defs>
 <rect width="51" height="51" rx="8" fill="url(#t1)"/>
 <ellipse cx="23.5" cy="29" rx="12.5" ry="8" fill="#6f6e80" opacity=".5" transform="rotate(-22 23.5 29)"/>
 <ellipse cx="20" cy="13.8" rx="12.5" ry="7" fill="url(#t1b)" transform="rotate(-15 20 13.8)"/>
 <ellipse cx="23" cy="27.5" rx="12.8" ry="7.8" fill="url(#t1b)" transform="rotate(-22 23 27.5)"/>
 <ellipse cx="28" cy="26.5" rx="3.5" ry="2.5" fill="#8f8da6"/>
 <ellipse cx="35.5" cy="40" rx="6" ry="4" fill="#f2f1f8"/><circle cx="38" cy="40.5" r="1.3" fill="#333"/></svg>
<div class="t" style="left:1170.00px;top:1089.65px;font-size:16px;color:#111;font-weight:400;">Wireless Earbuds Pro</div>
<div class="t" style="left:1170.00px;top:1117.16px;font-size:10.8px;color:#9a9a9a;font-weight:400;">(430)</div>
<div class="t" style="left:1436.50px;top:1103.89px;font-size:13px;color:#555;font-weight:400;">P-1001</div>
<div class="t" style="left:1536.30px;top:1103.47px;font-size:13.5px;color:#111;font-weight:400;">$210</div>
<div class="b" style="left:1626px;top:1097.8px;width:68px;height:23.600000000000136px;background:#e3f7f0;border-radius:12px"></div>
<div class="t" style="left:1460.00px;width:400px;text-align:center;top:1104.96px;font-size:9.5px;color:#47a686;font-weight:400;">In Strok</div>
<div class="b" style="left:1748.3px;top:1092.6px;width:35.0px;height:35.0px;background:#efefef;border-radius:50%"></div>
<svg class="b" style="left:1755.8px;top:1106.6px;" width="20" height="6" viewBox="0 0 20 6" fill="none"><circle cx="4" cy="3" r="1.4" fill="#111"/><circle cx="10" cy="3" r="1.4" fill="#111"/><circle cx="16" cy="3" r="1.4" fill="#111"/></svg>
<svg class="b" style="left:1108px;top:1152.2px;" width="51" height="51" viewBox="0 0 51 51" fill="none"><rect width="51" height="51" rx="8" fill="#d9d9d9"/>
 <path d="M0 8 Q0 0 8 0 L35 0 L8 51 Q0 51 0 43 Z" fill="#242424"/>
 <rect x="14" y="13" width="22" height="24" rx="6" fill="#bdbdbd" stroke="#6d6d6d" stroke-width="2.5" transform="rotate(-32 25 25)"/>
 <rect x="6" y="18" width="11" height="13" fill="#111" stroke="#ddd" stroke-width="1" transform="rotate(-32 11.5 24.5)"/></svg>
<div class="t" style="left:1170.00px;top:1157.65px;font-size:16px;color:#111;font-weight:400;">Smart Fitness Watch</div>
<div class="t" style="left:1170.00px;top:1185.16px;font-size:10.8px;color:#9a9a9a;font-weight:400;">(124)</div>
<div class="t" style="left:1436.50px;top:1171.89px;font-size:13px;color:#555;font-weight:400;">P-1002</div>
<div class="t" style="left:1536.30px;top:1171.47px;font-size:13.5px;color:#111;font-weight:400;">$125</div>
<div class="b" style="left:1626px;top:1165.8px;width:68px;height:23.600000000000136px;background:#fde1e7;border-radius:12px"></div>
<div class="t" style="left:1460.00px;width:400px;text-align:center;top:1172.96px;font-size:9.5px;color:#cf4a68;font-weight:400;">Out of Stock</div>
<div class="b" style="left:1748.3px;top:1160.6px;width:35.0px;height:35.0px;background:#efefef;border-radius:50%"></div>
<svg class="b" style="left:1755.8px;top:1174.6px;" width="20" height="6" viewBox="0 0 20 6" fill="none"><circle cx="4" cy="3" r="1.4" fill="#111"/><circle cx="10" cy="3" r="1.4" fill="#111"/><circle cx="16" cy="3" r="1.4" fill="#111"/></svg>
<svg class="b" style="left:1108px;top:1220.2px;" width="51" height="51" viewBox="0 0 51 51" fill="none"><rect width="51" height="51" rx="8" fill="#d3d2ce"/>
 <path d="M10 3 L31 3 Q34 14 32 29 L20 29 Q14 20 10 3 Z" fill="#e4e3df" stroke="#c6c5c1" stroke-width=".8"/>
 <path d="M20 13 Q25 10 29 13 L30 28 L21 28 Z" fill="#d98a4a"/>
 <path d="M19 30 Q28 27 35 32 Q39 42 37 49 L20 50 Q17 40 19 30 Z" fill="#efefec"/></svg>
<div class="t" style="left:1170.00px;top:1225.65px;font-size:16px;color:#111;font-weight:400;">Portable Blender</div>
<div class="t" style="left:1170.00px;top:1253.16px;font-size:10.8px;color:#9a9a9a;font-weight:400;">(200)</div>
<div class="t" style="left:1436.50px;top:1239.89px;font-size:13px;color:#555;font-weight:400;">P-1003</div>
<div class="t" style="left:1536.30px;top:1239.47px;font-size:13.5px;color:#111;font-weight:400;">$256</div>
<div class="b" style="left:1626px;top:1233.8px;width:68px;height:23.600000000000136px;background:#e3f7f0;border-radius:12px"></div>
<div class="t" style="left:1460.00px;width:400px;text-align:center;top:1240.96px;font-size:9.5px;color:#47a686;font-weight:400;">In Strok</div>
<div class="b" style="left:1748.3px;top:1228.6px;width:35.0px;height:35.0px;background:#efefef;border-radius:50%"></div>
<svg class="b" style="left:1755.8px;top:1242.6px;" width="20" height="6" viewBox="0 0 20 6" fill="none"><circle cx="4" cy="3" r="1.4" fill="#111"/><circle cx="10" cy="3" r="1.4" fill="#111"/><circle cx="16" cy="3" r="1.4" fill="#111"/></svg>
<svg class="b" style="left:1108px;top:1288.2px;" width="51" height="51" viewBox="0 0 51 51" fill="none"><defs><linearGradient id="t4" x1="0" y1="0" x2="1" y2="0"><stop offset="0" stop-color="#5b3578"/><stop offset=".5" stop-color="#a05b93"/><stop offset="1" stop-color="#c76ea2"/></linearGradient></defs>
 <rect width="51" height="51" rx="8" fill="url(#t4)"/>
 <path d="M8 22 Q25 6 51 9 L51 51 L8 51 Z" fill="#3fd6c1"/></svg>
<div class="t" style="left:1170.00px;top:1293.65px;font-size:16px;color:#111;font-weight:400;">Gaming Mouse RGB</div>
<div class="t" style="left:1170.00px;top:1321.16px;font-size:10.8px;color:#9a9a9a;font-weight:400;">(310)</div>
<div class="t" style="left:1436.50px;top:1307.89px;font-size:13px;color:#555;font-weight:400;">P-1004</div>
<div class="t" style="left:1536.30px;top:1307.47px;font-size:13.5px;color:#111;font-weight:400;">$89</div>
<div class="b" style="left:1626px;top:1301.8px;width:68px;height:23.600000000000136px;background:#e3f7f0;border-radius:12px"></div>
<div class="t" style="left:1460.00px;width:400px;text-align:center;top:1308.96px;font-size:9.5px;color:#47a686;font-weight:400;">In Strok</div>
<div class="b" style="left:1748.3px;top:1296.6px;width:35.0px;height:35.0px;background:#efefef;border-radius:50%"></div>
<svg class="b" style="left:1755.8px;top:1310.6px;" width="20" height="6" viewBox="0 0 20 6" fill="none"><circle cx="4" cy="3" r="1.4" fill="#111"/><circle cx="10" cy="3" r="1.4" fill="#111"/><circle cx="16" cy="3" r="1.4" fill="#111"/></svg>
</div></div></body></html>
